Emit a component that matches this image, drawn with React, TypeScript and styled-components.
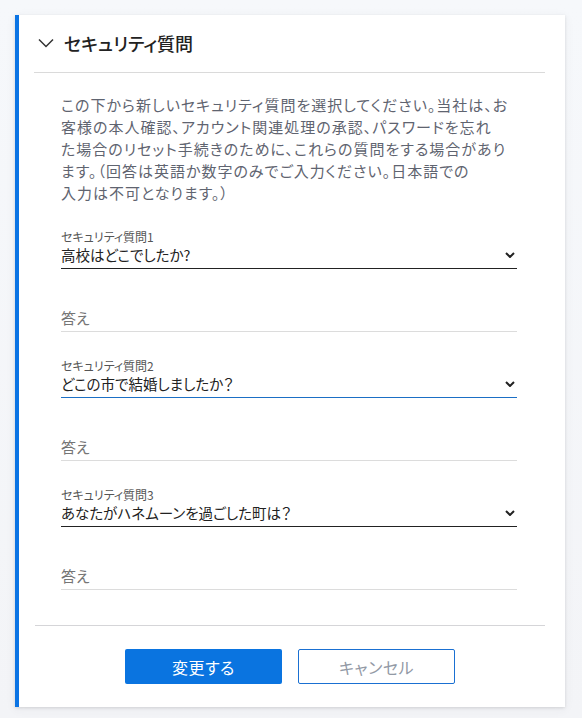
import React from 'react';
import styled, { createGlobalStyle } from 'styled-components';

const GlobalStyle = createGlobalStyle`
  html, body {
    margin: 0;
    padding: 0;
    background: #f3f5f8;
  }
  body {
    font-family: 'Noto Sans CJK JP', 'Noto Sans', sans-serif;
    color: #222;
    font-feature-settings: 'palt';
  }
`;

type Question = {
  label: string;
  value: string;
  focused?: boolean;
};

const QUESTIONS: Question[] = [
  { label: 'セキュリティ質問1', value: '高校はどこでしたか?' },
  { label: 'セキュリティ質問2', value: 'どこの市で結婚しましたか？', focused: true },
  { label: 'セキュリティ質問3', value: 'あなたがハネムーンを過ごした町は？' },
];

const Chevron = () => (
  <svg width="16" height="10" viewBox="0 0 16 10" fill="none">
    <path d="M1 1.5l7 7 7-7" stroke="#333" strokeWidth="1.5" />
  </svg>
);

const SmallChevron = () => (
  <svg width="10" height="6" viewBox="0 0 10 6" fill="none">
    <path d="M1 1l4 4 4-4" stroke="#222" strokeWidth="2" />
  </svg>
);

const App: React.FC = () => {
  return (
    <>
      <GlobalStyle />
      <Page>
        <Card>
          <Header>
            <Chevron />
            <Title>セキュリティ質問</Title>
          </Header>
          <Body>
            <Intro>
              この下から新しいセキュリティ質問を選択してください。当社は、お
              <br />
              客様の本人確認、アカウント関連処理の承認、パスワードを忘れ
              <br />
              た場合のリセット手続きのために、これらの質問をする場合があり
              <br />
              ます。（回答は英語か数字のみでご入力ください。日本語での
              <br />
              入力は不可となります。）
            </Intro>
            {QUESTIONS.map((q, idx) => (
              <QuestionGroup key={idx}>
                <FieldLabel>{q.label}</FieldLabel>
                <SelectRow focused={q.focused}>
                  <SelectValue>{q.value}</SelectValue>
                  <SmallChevron />
                </SelectRow>
                <AnswerInput placeholder="答え" />
              </QuestionGroup>
            ))}
          </Body>
          <Footer>
            <PrimaryButton>変更する</PrimaryButton>
            <SecondaryButton>キャンセル</SecondaryButton>
          </Footer>
        </Card>
      </Page>
    </>
  );
};

export default App;

const Page = styled.div`
  padding: 15px 17px 11px 15px;
  background: linear-gradient(180deg, #f6f8fb 0%, #f3f4f7 100%);
  min-height: 692px;
`;

const Card = styled.div`
  width: 550px;
  box-sizing: border-box;
  background: #ffffff;
  border-left: 4px solid #0b74e4;
  box-shadow: 0 1px 3px rgba(0, 0, 0, 0.12), 0 2px 10px rgba(60, 70, 90, 0.06);
  padding: 0 20px 0 15px;
`;

const Header = styled.div`
  display: flex;
  align-items: center;
  gap: 10px;
  padding: 16px 0 17px 4px;
  border-bottom: 1px solid #dadada;
`;

const Title = styled.h2`
  margin: 0;
  font-size: 18px;
  line-height: 24px;
  font-weight: 500;
  color: #222;
`;

const Body = styled.div`
  padding: 21px 28px 35px 27px;
`;

const Intro = styled.p`
  margin: 0 0 24px;
  font-size: 15px;
  line-height: 22px;
  letter-spacing: 1px;
  color: #5f6470;
  white-space: nowrap;
`;

const QuestionGroup = styled.div`
  & + & {
    margin-top: 25px;
  }
`;

const FieldLabel = styled.div`
  font-size: 12px;
  line-height: 17px;
  color: #555;
`;

const SelectRow = styled.div<{ focused?: boolean }>`
  display: flex;
  align-items: center;
  justify-content: space-between;
  height: 24px;
  padding: 0 2px 3px 0;
  box-sizing: border-box;
  border-bottom: 1px solid ${(props) => (props.focused ? '#1b6fc5' : '#222')};
`;

const SelectValue = styled.span`
  font-size: 14.5px;
  line-height: 20px;
  color: #222;
`;

const AnswerInput = styled.input`
  display: block;
  width: 100%;
  box-sizing: border-box;
  margin-top: 34px;
  height: 29px;
  padding: 0;
  border: none;
  border-bottom: 1px solid #dcdcdc;
  font-family: inherit;
  font-feature-settings: 'palt';
  font-size: 15px;
  background: transparent;
  outline: none;

  ::placeholder {
    color: #8a8f99;
  }
`;

const Footer = styled.div`
  display: flex;
  justify-content: center;
  gap: 16px;
  padding: 23px 0 23px;
  border-top: 1px solid #d5d5d8;
  margin-left: 1px;
`;

const BaseButton = styled.button`
  width: 157px;
  height: 35px;
  border-radius: 2px;
  font-family: inherit;
  font-feature-settings: 'palt';
  font-size: 16px;
  letter-spacing: 0.5px;
  cursor: pointer;
  box-sizing: border-box;
`;

const PrimaryButton = styled(BaseButton)`
  background: #0a74e0;
  border: none;
  color: #ffffff;
`;

const SecondaryButton = styled(BaseButton)`
  background: #ffffff;
  border: 1px solid #1a70d2;
  color: #9299a5;
`;
